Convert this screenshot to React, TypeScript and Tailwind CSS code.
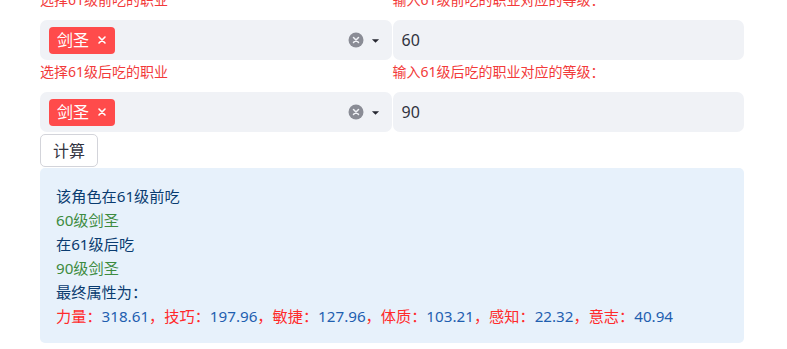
import { ReactNode } from 'react';

const font = { fontFamily: '"Noto Sans", "Noto Sans CJK SC", sans-serif' };

function Label({ children }: { children: ReactNode }) {
  return <div className="h-[32px] pt-[2px] text-[14px] leading-[20px] text-[#f23a3a]">{children}</div>;
}

function TagSelect() {
  return (
    <div className="h-[40px] rounded-[7px] bg-[#f0f2f6] flex items-center pl-[9px] pr-[12px]">
      <div className="h-[27px] rounded-[4px] bg-[#ff4b4b] text-white flex items-center pl-[8px] pr-[8px] gap-[8px] text-[16px]">
        <span>剑圣</span>
        <svg width="10" height="10" viewBox="0 0 10 10">
          <path d="M2 2 L8 8 M8 2 L2 8" stroke="white" strokeWidth="1.6" strokeLinecap="round" />
        </svg>
      </div>
      <div className="flex-1" />
      <svg width="16" height="16" viewBox="0 0 16 16">
        <circle cx="8" cy="8" r="7.5" fill="#8a8c95" />
        <path d="M5.5 5.5 L10.5 10.5 M10.5 5.5 L5.5 10.5" stroke="#f0f2f6" strokeWidth="1.5" strokeLinecap="round" />
      </svg>
      <svg className="ml-[7px]" width="9" height="9" viewBox="0 0 10 10">
        <path d="M1 3.5 L9 3.5 L5 7.5 Z" fill="#262730" />
      </svg>
    </div>
  );
}

function NumInput({ value }: { value: string }) {
  return (
    <div className="h-[40px] rounded-[7px] bg-[#f0f2f6] flex items-center pl-[9px] text-[16px] text-[#31333f]">
      {value}
    </div>
  );
}

function Stat({ name, value, last }: { name: string; value: string; last?: boolean }) {
  return (
    <>
      <span className="text-[#ff2b2b]">{name}：</span>
      <span className="text-[#1f5fb0]">{value}</span>
      {!last && <span className="text-[#ff2b2b]">，</span>}
    </>
  );
}

export default function App() {
  return (
    <div className="min-h-screen bg-white overflow-hidden" style={font}>
      <div className="ml-[40px] w-[704px] mt-[-12px]">
        <div className="grid grid-cols-2 gap-x-[1px]">
          <div>
            <Label>选择61级前吃的职业</Label>
            <TagSelect />
            <Label>选择61级后吃的职业</Label>
            <TagSelect />
          </div>
          <div>
            <Label>输入61级前吃的职业对应的等级：</Label>
            <NumInput value="60" />
            <Label>输入61级后吃的职业对应的等级：</Label>
            <NumInput value="90" />
          </div>
        </div>
        <button className="mt-[2px] h-[33px] px-[12px] rounded-[5px] border border-[#d3d4da] bg-white text-[16px] text-[#31333f] flex items-center">
          计算
        </button>
        <div className="mt-[1px] rounded-[5px] bg-[#e7f1fb] px-[16px] pt-[16px] pb-[15px] text-[15.2px] leading-[24px] text-[#0a3c70]">
          <div>该角色在61级前吃</div>
          <div className="text-[#3d8b40]">60级剑圣</div>
          <div>在61级后吃</div>
          <div className="text-[#3d8b40]">90级剑圣</div>
          <div>最终属性为：</div>
          <div>
            <Stat name="力量" value="318.61" />
            <Stat name="技巧" value="197.96" />
            <Stat name="敏捷" value="127.96" />
            <Stat name="体质" value="103.21" />
            <Stat name="感知" value="22.32" />
            <Stat name="意志" value="40.94" last />
          </div>
        </div>
      </div>
    </div>
  );
}
